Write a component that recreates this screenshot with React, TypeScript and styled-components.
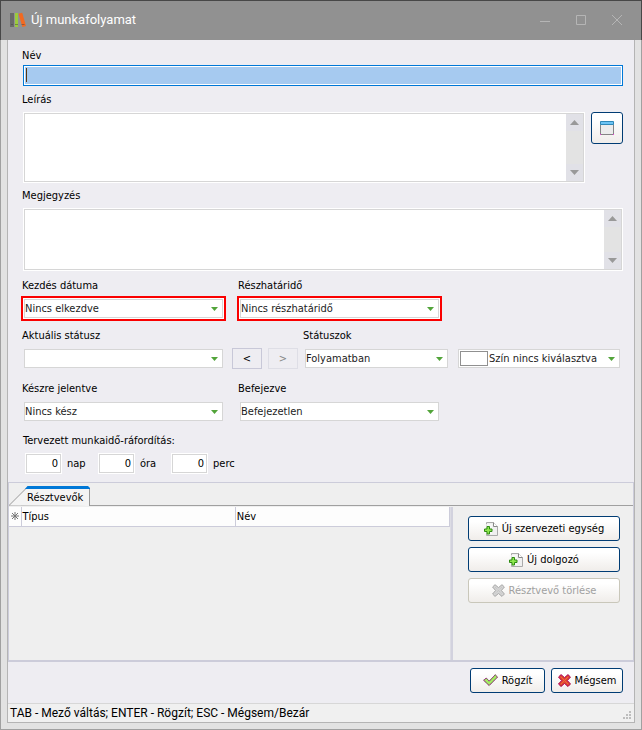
import React from 'react';
import styled, { createGlobalStyle, css } from 'styled-components';

const GlobalStyle = createGlobalStyle`
  *, *::before, *::after { box-sizing: border-box; }
  body { margin: 0; background: #e2e2e2; }
  body, button, input, select, textarea {
    font-family: "DejaVu Sans Condensed", "DejaVu Sans", sans-serif;
    font-size: 11px;
    color: #000;
  }
`;

const Window = styled.main`
  min-height: 100vh;
  display: flex;
  flex-direction: column;
  background: #e2e2e2;
  border: 1px solid #a0a0a0;
  border-top: 0;
`;

const TitleBar = styled.header`
  height: 40px;
  margin: 0 -1px;
  padding: 0 16px 2px 9px;
  display: flex;
  align-items: center;
  background: #919191;
  border: 1px solid #474747;
  border-bottom: 0;
`;

const Title = styled.h1`
  flex: 1;
  margin: 0 0 0 5px;
  font: 400 13px/18px Roboto, sans-serif;
  color: #fff;
`;

const WindowControls = styled.div`
  display: flex;
  gap: 20px;
`;

const WindowButton = styled.button`
  width: 16px;
  height: 16px;
  padding: 0;
  border: 0;
  background: none;
  svg { display: block; }
`;

const Content = styled.div`
  flex: 1;
  margin: 0 6px 6px;
  display: flex;
  flex-direction: column;
  background: #eeedf2;
  border: 1px solid #b4b4b4;
  border-top: 0;
`;

const Form = styled.form`
  padding: 7px 11px 8px 13px;
  display: flex;
  flex-direction: column;
`;

const Row = styled.div<{ $top?: number; $gap?: number; $grow?: boolean }>`
  display: flex;
  align-items: flex-end;
  margin-top: ${p => p.$top ?? 0}px;
  gap: ${p => p.$gap ?? 0}px;
  ${p => p.$grow && css`flex: 1; min-width: 0;`}
`;

const Field = styled.div<{ $top?: number; $width?: number; $gap?: number }>`
  display: flex;
  flex-direction: column;
  min-width: 0;
  gap: ${p => p.$gap ?? 1}px;
  margin-top: ${p => p.$top ?? 0}px;
  ${p => (p.$width ? css`flex: 0 1 ${p.$width}px;` : css`flex: 1 1 auto;`)}
`;

const labelText = css`
  height: 18px;
  padding-left: 1px;
  line-height: 18px;
  white-space: nowrap;
`;
const Label = styled.label`${labelText}`;
const GroupLabel = styled.span`${labelText} padding-left: 2px;`;

const NameBox = styled.div`
  position: relative;
  height: 21px;
  margin-left: 2px;
  padding: 1px;
  background: #fff;
  border: 1px solid #0078d7;
`;

const NameInput = styled.input`
  display: block;
  width: 100%;
  height: 100%;
  padding: 0 3px;
  border: 0;
  outline: 0;
  background: #a6caf0;
`;

const Caret = styled.span`
  position: absolute;
  left: 2px;
  top: 2px;
  width: 1px;
  height: 14px;
  background: #593510;
`;

const MemoRow = styled.div`
  display: flex;
  align-items: flex-start;
  gap: 6px;
  margin-left: 2px;
`;

const MemoBox = styled.div<{ $height: number }>`
  flex: 1;
  display: flex;
  height: ${p => p.$height}px;
  background: #fff;
  border: 1px solid #fff;
  outline: 1px solid #d6d6d6;
  outline-offset: -2px;
  padding: 1px;
`;

const Memo = styled.textarea`
  flex: 1;
  min-width: 0;
  padding: 2px;
  border: 0;
  outline: 0;
  resize: none;
  overflow: hidden;
  background: #fff;
`;

const ScrollTrack = styled.div`
  width: 17px;
  display: flex;
  flex-direction: column;
  justify-content: space-between;
  background: #e3e3e3;
`;

const ScrollButton = styled.button`
  width: 17px;
  height: 17px;
  padding: 0;
  border: 0;
  display: grid;
  place-items: center;
  background: #e1e1e7;
`;

const toolFace = css`
  background: linear-gradient(#fff 20%, #f0edea);
  border: 1px solid #003c74;
  border-radius: 3px;
`;

const WindowPick = styled.button`
  ${toolFace}
  flex: none;
  width: 32px;
  height: 32px;
  padding: 0;
  display: grid;
  place-items: center;
`;

const SelectFrame = styled.div<{ $marked?: boolean }>`
  position: relative;
  height: 25px;
  padding: 1px;
  border: 2px solid ${p => (p.$marked ? '#fa0000' : 'transparent')};
  background: ${p => (p.$marked ? '#fff' : 'transparent')};
  display: flex;
`;

const Select = styled.select<{ $indent?: number }>`
  appearance: none;
  flex: 1;
  min-width: 0;
  height: 19px;
  padding: 0 16px 0 ${p => p.$indent ?? 0}px;
  border: 1px solid #d6d6d6;
  border-radius: 0;
  outline: 0;
  background: #fff;
  color: #222;
  line-height: 17px;
`;

const SelectArrow = styled.svg`
  position: absolute;
  right: 6px;
  top: 9px;
  pointer-events: none;
`;

const Swatch = styled.span`
  position: absolute;
  left: 3px;
  top: 3px;
  width: 28px;
  height: 15px;
  background: #fff;
  border: 1px solid #909090;
  pointer-events: none;
`;

const StepButtons = styled.div`
  display: flex;
  gap: 6px;
  padding: 0 0 2px 2px;
`;

const StepButton = styled.button`
  width: 30px;
  height: 21px;
  padding: 0;
  border: 1px solid #c8c8d8;
  background: #eeedf2;
  line-height: 16px;
  &:disabled { color: #888; border-color: #dedee6; }
`;

const AmountRow = styled.div`
  display: flex;
  padding-left: 4px;
`;

const Amount = styled.label`
  width: 73px;
  display: flex;
  align-items: center;
  gap: 5px;
`;

const AmountInput = styled.input`
  width: 37px;
  height: 21px;
  padding: 0 3px;
  border: 1px solid #fff;
  outline: 1px solid #d6d6d6;
  outline-offset: -2px;
  background: #fff;
  text-align: right;
`;

const Panel = styled.section`
  flex: 1;
  display: flex;
  flex-direction: column;
  background: #efefef;
  border: 1px solid #ccccda;
  border-width: 1px 1px 2px;
`;

const TabList = styled.div`
  height: 23px;
  padding-top: 3px;
  display: flex;
  border-bottom: 1px solid #a0a0a0;
`;

const Tab = styled.button`
  position: relative;
  width: 82px;
  height: 20px;
  padding: 3px 0 0 18px;
  border: 0;
  background: none;
  text-align: left;
  white-space: nowrap;
`;

const TabShape = styled.svg`
  position: absolute;
  left: 0;
  top: 0;
`;

const TabText = styled.span`position: relative;`;

const PanelBody = styled.div`
  flex: 1;
  display: flex;
  padding-top: 1px;
`;

const GridArea = styled.div`
  flex: 1;
  min-width: 0;
  border-right: 1px solid #dcdce4;
`;

const Table = styled.table`
  width: 100%;
  table-layout: fixed;
  border-collapse: collapse;
`;

const HeadCell = styled.th<{ $width?: number }>`
  width: ${p => (p.$width ? `${p.$width}px` : 'auto')};
  height: 19px;
  padding: 0 1px;
  background: #fdfdfd;
  border-right: 1px solid #ccccda;
  border-bottom: 1px solid #ccccda;
  font-weight: 400;
  line-height: 17px;
  text-align: left;
  svg { display: block; margin: 0 auto; }
`;

const Actions = styled.div`
  width: 182px;
  padding: 9px 13px 0 15px;
  display: flex;
  flex-direction: column;
  gap: 6px;
  border-left: 2px solid #d2d2de;
`;

const ActionButton = styled.button<{ $width?: number }>`
  ${toolFace}
  width: ${p => (p.$width ? `${p.$width}px` : 'auto')};
  height: 25px;
  padding: 0 2px;
  display: flex;
  align-items: center;
  justify-content: center;
  gap: 4px;
  white-space: nowrap;
  svg { flex: none; }
  &:disabled { color: #a0a0a0; border-color: #c9c7ba; }
`;

const Footer = styled.div`
  display: flex;
  justify-content: flex-end;
  gap: 6px;
  padding: 6px 11px 10px;
`;

const StatusBar = styled.footer`
  height: 19px;
  padding: 0 2px;
  display: flex;
  align-items: center;
  justify-content: space-between;
  background: #f0f0f0;
  border-top: 1px solid #d7d7d7;
  font: 12px/18px Roboto, sans-serif;
  svg { align-self: flex-end; }
`;

function BooksLogo() {
  return (
    <svg width="16" height="16" viewBox="0 0 16 16" aria-hidden="true">
      <path d="M0 1h4v14H0z" fill="#6a6a6a" />
      <path d="M5 1h3v14H5z" fill="#9bcb3c" />
      <path d="M8.5 1.8 12.2.8 16 14l-3.6 1z" fill="#f26a21" />
      <path d="M1 12h2v1H1zM5 12h3v1H5zM11.5 12h3v1h-3z" fill="#444" opacity=".5" />
    </svg>
  );
}

function ScrollArrow({ down }: { down?: boolean }) {
  return (
    <svg width="9" height="5" viewBox="0 0 9 5" aria-hidden="true">
      <path d={down ? 'M0 0h9L4.5 5z' : 'M0 5h9L4.5 0z'} fill="#999" />
    </svg>
  );
}

function DropArrow() {
  return (
    <SelectArrow width="7" height="4" viewBox="0 0 7 4" aria-hidden="true">
      <path d="M0 0h7L3.5 4z" fill="#52a43a" />
    </SelectArrow>
  );
}

function AddPageIcon() {
  return (
    <svg width="14" height="14" viewBox="0 0 14 14" aria-hidden="true">
      <path d="M2.5.5h7l4 4v9h-11z" fill="#f0f0f0" stroke="#aaa" />
      <path d="M9.5.5v4h4" fill="#fff" stroke="#888" />
      <path d="M0 2h8v10H0z" fill="#fafafa" opacity=".7" />
      <path d="M3 4.5h2.5V7H8v2.5H5.5V12H3V9.500H.5V7H3z" fill="#8fe84e" stroke="#2f8a12" />
    </svg>
  );
}

function CrossIcon({ muted }: { muted?: boolean }) {
  const shape = 'M3 .7 6.5 3.600 10 .7 12.4 3 9.4 6.5 12.4 10 10 12.4 6.5 9.5 3 12.4.6 10 3.6 6.5.6 3z';
  return (
    <svg width="13" height="13" viewBox="0 0 13 13" aria-hidden="true">
      <path d={shape} fill={muted ? '#d4d4d4' : '#e0492e'} stroke={muted ? '#a8a8a8' : '#a01c1c'} />
      {!muted && <path d={shape} fill="none" stroke="#d40cb4" strokeDasharray="1 1" />}
      <path d="m3 3 7 7M10 3l-7 7" stroke={muted ? '#c0c0c0' : '#f0643c'} strokeDasharray={muted ? '1 1' : undefined} />
    </svg>
  );
}

function CheckIcon() {
  const shape = 'M.7 6.3 3.2 4l3 3.2L12.2.8l2.300 2.3-8.300 8.4z';
  return (
    <svg width="15" height="13" viewBox="0 0 15 13" aria-hidden="true">
      <path d={shape} fill="#a4ec62" stroke="#5c8a38" />
      <path d={shape} fill="none" stroke="#d40cc4" strokeDasharray="1 1" />
    </svg>
  );
}

type PickProps = { id: string; value: string; marked?: boolean; swatch?: boolean; indent?: number; label?: string };

function Pick({ id, value, marked, swatch, indent, label }: PickProps) {
  return (
    <SelectFrame $marked={marked}>
      <Select id={id} aria-label={label} defaultValue={value} $indent={indent}>
        <option value={value}>{value}</option>
      </Select>
      {swatch && <Swatch />}
      <DropArrow />
    </SelectFrame>
  );
}

function MemoField({ id, height }: { id: string; height: number }) {
  return (
    <MemoBox $height={height}>
      <Memo id={id} />
      <ScrollTrack>
        <ScrollButton type="button" aria-label="Fel"><ScrollArrow /></ScrollButton>
        <ScrollButton type="button" aria-label="Le"><ScrollArrow down /></ScrollButton>
      </ScrollTrack>
    </MemoBox>
  );
}

const amounts = [
  { id: 'days', unit: 'nap' },
  { id: 'hours', unit: 'óra' },
  { id: 'minutes', unit: 'perc' },
];

export default function App() {
  return (
    <>
      <GlobalStyle />
      <Window>
        <TitleBar>
          <BooksLogo />
          <Title>Új munkafolyamat</Title>
          <WindowControls>
            <WindowButton aria-label="Kis méret">
              <svg width="16" height="16" fill="none" stroke="#b5b5b5"><path d="M3 9.5h10" /></svg>
            </WindowButton>
            <WindowButton aria-label="Teljes méret">
              <svg width="16" height="16" fill="none" stroke="#b5b5b5"><path d="M3.5 3.5h9v9h-9z" /></svg>
            </WindowButton>
            <WindowButton aria-label="Bezárás">
              <svg width="16" height="16" fill="none" stroke="#b5b5b5"><path d="m3 3 10 10M13 3 3 13" /></svg>
            </WindowButton>
          </WindowControls>
        </TitleBar>
        <Content>
          <Form>
            <Field $gap={0}>
              <Label htmlFor="name">Név</Label>
              <NameBox><NameInput id="name" type="text" /><Caret /></NameBox>
            </Field>
            <Field $top={5} $gap={3}>
              <Label htmlFor="description">Leírás</Label>
              <MemoRow>
                <MemoField id="description" height={71} />
                <WindowPick type="button" aria-label="Leírás megnyitása">
                  <svg width="14" height="14" viewBox="0 0 14 14" aria-hidden="true">
                    <path d="M.5 3.5h13v10H.5z" fill="#ececec" stroke="#858585" />
                    <path d="M.5.5h13v3H.5z" fill="#6cc4f4" stroke="#2f88b8" />
                    <path d="M0 13h1v1H0zM13 13h1v1h-1z" fill="#f03ce0" />
                  </svg>
                </WindowPick>
              </MemoRow>
            </Field>
            <Field $top={4} $gap={3}>
              <Label htmlFor="note">Megjegyzés</Label>
              <MemoRow><MemoField id="note" height={63} /></MemoRow>
            </Field>
            <Row $top={6} $gap={11}>
              <Field $width={205}>
                <Label htmlFor="start">Kezdés dátuma</Label>
                <Pick id="start" value="Nincs elkezdve" marked />
              </Field>
              <Field $width={205}>
                <Label htmlFor="deadline">Részhatáridő</Label>
                <Pick id="deadline" value="Nincs részhatáridő" marked />
              </Field>
            </Row>
            <Row $top={6} $gap={4}>
              <Field $width={205}>
                <Label htmlFor="current">Aktuális státusz</Label>
                <Pick id="current" value="" />
              </Field>
              <StepButtons>
                <StepButton type="button">&lt;</StepButton>
                <StepButton type="button" disabled>&gt;</StepButton>
              </StepButtons>
              <Row $gap={4} $grow>
                <Field $width={149}>
                  <Label htmlFor="statuses">Státuszok</Label>
                  <Pick id="statuses" value="Folyamatban" />
                </Field>
                <Field $width={168}>
                  <Pick id="color" value="Szín nincs kiválasztva" label="Szín" swatch indent={30} />
                </Field>
              </Row>
            </Row>
            <Row $top={9} $gap={11}>
              <Field $width={205}>
                <Label htmlFor="reported">Készre jelentve</Label>
                <Pick id="reported" value="Nincs kész" />
              </Field>
              <Field $width={205}>
                <Label htmlFor="finished">Befejezve</Label>
                <Pick id="finished" value="Befejezetlen" />
              </Field>
            </Row>
            <Field $top={8} $gap={3}>
              <GroupLabel>Tervezett munkaidő-ráfordítás:</GroupLabel>
              <AmountRow>
                {amounts.map(a => (
                  <Amount key={a.id}>
                    <AmountInput id={a.id} type="text" defaultValue="0" />
                    {a.unit}
                  </Amount>
                ))}
              </AmountRow>
            </Field>
          </Form>
          <Panel>
            <TabList role="tablist">
              <Tab role="tab" aria-selected="true">
                <TabShape width="82" height="20" viewBox="0 0 82 20" aria-hidden="true">
                  <path d="M0 19.5 18 1.5h61.5l1 1V20" fill="#f4f4f4" stroke="#999" />
                  <path d="M16 3 18.5 0H79l2 2v1z" fill="#0078d7" />
                </TabShape>
                <TabText>Résztvevők</TabText>
              </Tab>
            </TabList>
            <PanelBody>
              <GridArea>
                <Table>
                  <thead>
                    <tr>
                      <HeadCell $width={12} aria-label="Sor">
                        <svg width="8" height="8" viewBox="0 0 8 8" stroke="#777" aria-hidden="true">
                          <path d="M4 0v8M0 4h8M1 1l6 6M7 1 1 7" />
                        </svg>
                      </HeadCell>
                      <HeadCell>Típus</HeadCell>
                      <HeadCell>Név</HeadCell>
                    </tr>
                  </thead>
                </Table>
              </GridArea>
              <Actions>
                <ActionButton type="button"><AddPageIcon />Új szervezeti egység</ActionButton>
                <ActionButton type="button"><AddPageIcon />Új dolgozó</ActionButton>
                <ActionButton type="button" disabled><CrossIcon muted />Résztvevő törlése</ActionButton>
              </Actions>
            </PanelBody>
          </Panel>
          <Footer>
            <ActionButton type="button" $width={75}><CheckIcon />Rögzít</ActionButton>
            <ActionButton type="button" $width={72}><CrossIcon />Mégsem</ActionButton>
          </Footer>
          <StatusBar>
            <span>TAB - Mező váltás; ENTER - Rögzít; ESC - Mégsem/Bezár</span>
            <svg width="9" height="12" viewBox="0 0 9 12" fill="#bdbdbd" aria-hidden="true">
              <path d="M6 1h2v2H6zM3 4h2v2H3zM6 4h2v2H6zM0 7h2v2H0zM3 7h2v2H3zM6 7h2v2H6z" />
            </svg>
          </StatusBar>
        </Content>
      </Window>
    </>
  );
}
